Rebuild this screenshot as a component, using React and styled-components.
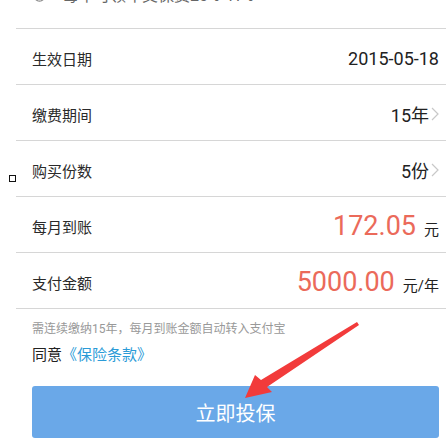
import React from "react";
import styled, { createGlobalStyle } from "styled-components";

const GlobalStyle = createGlobalStyle`
  html, body {
    margin: 0;
    padding: 0;
    background: #fff;
  }
  body {
    font-family: Roboto, "Noto Sans CJK SC", sans-serif;
    color: #333;
    overflow: hidden;
  }
`;

const rows = [
  { label: "生效日期", value: "2015-05-18" },
  { label: "缴费期间", value: "15年", arrow: true },
  { label: "购买份数", value: "5份", arrow: true },
  { label: "每月到账", amount: "172.05", unit: "元" },
  { label: "支付金额", amount: "5000.00", unit: "元/年" },
];

function App() {
  return (
    <>
      <GlobalStyle />
      <Page>
        <TopNote>
          <InfoIcon viewBox="0 0 14 14">
            <circle cx="7" cy="7" r="6" fill="none" stroke="#888" strokeWidth="1.2" />
            <path d="M4.5 7.2l1.8 1.8 3.4-3.6" fill="none" stroke="#888" strokeWidth="1.2" />
          </InfoIcon>
          <TopText>每年可领年交保费20%-41%</TopText>
        </TopNote>
        <List>
          {rows.map((row) => (
            <Row key={row.label}>
              <Label>{row.label}</Label>
              {row.amount ? (
                <Value $money>
                  <Amount>{row.amount}</Amount>
                  <Unit>{row.unit}</Unit>
                </Value>
              ) : (
                <Value>
                  <Plain>{row.value}</Plain>
                  {row.arrow && (
                    <Chevron viewBox="0 0 8 14">
                      <path d="M1 1l6 6-6 6" fill="none" stroke="#c8c8c8" strokeWidth="1.2" />
                    </Chevron>
                  )}
                </Value>
              )}
            </Row>
          ))}
        </List>
        <Footer>
          <Notice>需连续缴纳15年，每月到账金额自动转入支付宝</Notice>
          <Agree>
            同意<Link>《保险条款》</Link>
          </Agree>
          <Button>立即投保</Button>
        </Footer>
        <CheckMark />
        <Overlay viewBox="0 0 446 441">
          <polygon
            points="245,398 255,375 261,380 357,322 359,325 267,387 272,392"
            fill="#f23b3b"
          />
        </Overlay>
      </Page>
    </>
  );
}

export default App;

const Page = styled.div`
  position: relative;
  width: 446px;
  height: 441px;
  overflow: hidden;
  background: #fff;
`;

const TopNote = styled.div`
  display: flex;
  align-items: flex-start;
  gap: 16px;
  height: 42px;
  margin-top: -14px;
  padding-left: 33px;
  box-sizing: border-box;
`;

const InfoIcon = styled.svg`
  width: 13px;
  height: 13px;
  margin-top: 3px;
`;

const TopText = styled.span`
  font-size: 16px;
  line-height: 20px;
  color: #666;
`;

const List = styled.div`
  margin-left: 16px;
  border-bottom: 1px solid #d6d6d6;
`;

const Row = styled.div`
  display: flex;
  align-items: center;
  justify-content: space-between;
  box-sizing: border-box;
  height: 56px;
  border-top: 1px solid #d6d6d6;
  padding: 3px 7px 0 16px;
`;

const Label = styled.span`
  font-size: 15px;
  color: #2a2a2a;
`;

const Value = styled.span`
  display: flex;
  align-items: ${(p) => (p.$money ? "baseline" : "center")};
  color: #222;
`;

const Plain = styled.span`
  font-size: 18px;
`;

const Amount = styled.span`
  font-size: 27px;
  color: #eb6a5a;
  margin-right: 8px;
`;

const Unit = styled.span`
  font-size: 15px;
  color: #222;
`;

const Chevron = styled.svg`
  width: 8px;
  height: 14px;
  margin-left: 2px;
`;

const Footer = styled.div`
  padding: 11px 7px 0 32px;
`;

const Notice = styled.div`
  font-size: 12px;
  line-height: 18px;
  color: #999;
`;

const Agree = styled.div`
  margin-top: 6px;
  font-size: 15px;
  line-height: 22px;
  color: #222;
`;

const Link = styled.span`
  color: #2b9bd7;
`;

const Button = styled.div`
  display: flex;
  align-items: center;
  justify-content: center;
  margin-top: 20px;
  height: 52px;
  border-radius: 3px;
  background: #6aa8e8;
  color: #fff;
  font-size: 20px;
`;

const CheckMark = styled.span`
  position: absolute;
  left: 9px;
  top: 175px;
  width: 5px;
  height: 5px;
  border: 1px solid #111;
`;

const Overlay = styled.svg`
  position: absolute;
  left: 0;
  top: 0;
  width: 446px;
  height: 441px;
  pointer-events: none;
`;
